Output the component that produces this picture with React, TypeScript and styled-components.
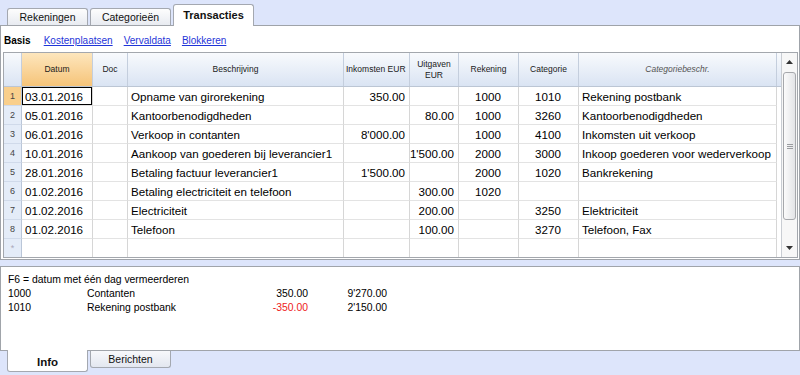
import React from 'react';
import styled, { createGlobalStyle, css } from 'styled-components';

type Align = 'left' | 'right' | 'center';

type Entry = {
  date: string;
  desc: string;
  income: string;
  expense: string;
  account: string;
  category: string;
  catDesc: string;
};

const COLS = '18px 71px 35px 216px 66px 49px 60px 60px 198px';

const rows: Entry[] = [
  { date: '03.01.2016', desc: 'Opname van girorekening', income: '350.00', expense: '', account: '1000', category: '1010', catDesc: 'Rekening postbank' },
  { date: '05.01.2016', desc: 'Kantoorbenodigdheden', income: '', expense: '80.00', account: '1000', category: '3260', catDesc: 'Kantoorbenodigdheden' },
  { date: '06.01.2016', desc: 'Verkoop in contanten', income: "8'000.00", expense: '', account: '1000', category: '4100', catDesc: 'Inkomsten uit verkoop' },
  { date: '10.01.2016', desc: 'Aankoop van goederen bij leverancier1', income: '', expense: "1'500.00", account: '2000', category: '3000', catDesc: 'Inkoop goederen voor wederverkoop' },
  { date: '28.01.2016', desc: 'Betaling factuur leverancier1', income: "1'500.00", expense: '', account: '2000', category: '1020', catDesc: 'Bankrekening' },
  { date: '01.02.2016', desc: 'Betaling electriciteit en telefoon', income: '', expense: '300.00', account: '1020', category: '', catDesc: '' },
  { date: '01.02.2016', desc: 'Electriciteit', income: '', expense: '200.00', account: '', category: '3250', catDesc: 'Elektriciteit' },
  { date: '01.02.2016', desc: 'Telefoon', income: '', expense: '100.00', account: '', category: '3270', catDesc: 'Telefoon, Fax' },
];

const balances = [
  { account: '1000', name: 'Contanten', amount: '350.00', total: "9'270.00", negative: false },
  { account: '1010', name: 'Rekening postbank', amount: '-350.00', total: "2'150.00", negative: true },
];

const App: React.FC = () => {
  return (
    <Page>
      <GlobalStyle />
      <TabStrip>
        <Tab>Rekeningen</Tab>
        <Tab>Categorieën</Tab>
        <Tab $active>Transacties</Tab>
      </TabStrip>

      <Panel>
        <SubBar>
          <SubLabel>Basis</SubLabel>
          <SubLink>Kostenplaatsen</SubLink>
          <SubLink>Vervaldata</SubLink>
          <SubLink>Blokkeren</SubLink>
        </SubBar>

        <GridFrame>
          <GridMain>
            <HeaderRow>
              <HeadCell />
              <HeadCell $highlight>Datum</HeadCell>
              <HeadCell>Doc</HeadCell>
              <HeadCell>Beschrijving</HeadCell>
              <HeadCell $clip>Inkomsten EUR</HeadCell>
              <HeadCell>
                Uitgaven
                <br />
                EUR
              </HeadCell>
              <HeadCell>Rekening</HeadCell>
              <HeadCell>Categorie</HeadCell>
              <HeadCell $italic>Categoriebeschr.</HeadCell>
            </HeaderRow>
            <Body>
              {rows.map((r, i) => (
                <Row key={i}>
                  <RowHead $selected={i === 0}>{i + 1}</RowHead>
                  <Cell $selected={i === 0}>{r.date}</Cell>
                  <Cell />
                  <Cell>{r.desc}</Cell>
                  <Cell $align="right">{r.income}</Cell>
                  <Cell $align="right">{r.expense}</Cell>
                  <Cell $align="center">{r.account}</Cell>
                  <Cell $align="center">{r.category}</Cell>
                  <Cell>{r.catDesc}</Cell>
                </Row>
              ))}
              <Row>
                <RowHead $faint>*</RowHead>
                <Cell />
                <Cell />
                <Cell />
                <Cell />
                <Cell />
                <Cell />
                <Cell />
                <Cell />
              </Row>
            </Body>
          </GridMain>

          <ScrollBar>
            <ScrollArrow>
              <svg width="7" height="4" viewBox="0 0 7 4">
                <path d="M0 4 L3.5 0 L7 4 Z" fill="#333" />
              </svg>
            </ScrollArrow>
            <Track>
              <Thumb>
                <Grip />
              </Thumb>
            </Track>
            <ScrollArrow>
              <svg width="7" height="4" viewBox="0 0 7 4">
                <path d="M0 0 L3.5 4 L7 0 Z" fill="#333" />
              </svg>
            </ScrollArrow>
          </ScrollBar>
        </GridFrame>
      </Panel>

      <InfoPanel>
        <InfoLine>F6 = datum met één dag vermeerderen</InfoLine>
        {balances.map((b) => (
          <BalanceLine key={b.account}>
            <span>{b.account}</span>
            <span>{b.name}</span>
            <Amount $negative={b.negative}>{b.amount}</Amount>
            <Amount>{b.total}</Amount>
          </BalanceLine>
        ))}
      </InfoPanel>

      <BottomTabs>
        <BottomTab $active>Info</BottomTab>
        <BottomTab>Berichten</BottomTab>
      </BottomTabs>
    </Page>
  );
};

export default App;

const GlobalStyle = createGlobalStyle`
  html, body {
    margin: 0;
    padding: 0;
    background: #dde5fb;
    font-family: "Liberation Sans", Arial, sans-serif;
  }
`;

const Page = styled.div`
  width: 800px;
  height: 375px;
  display: flex;
  flex-direction: column;
  overflow: hidden;
  background: #dde5fb;
`;

const TabStrip = styled.div`
  height: 25px;
  display: flex;
  align-items: flex-end;
  gap: 2px;
  padding-left: 7px;
`;

const Tab = styled.div<{ $active?: boolean }>`
  width: 81px;
  box-sizing: border-box;
  height: 17px;
  display: flex;
  align-items: center;
  justify-content: center;
  border: 1px solid #a4a8b0;
  border-bottom: none;
  border-radius: 3px 3px 0 0;
  background: linear-gradient(#fdfdfd, #e8ebf1);
  font-size: 10.5px;
  color: #111;

  ${(p) =>
    p.$active &&
    css`
      position: relative;
      z-index: 1;
      height: 22px;
      margin-bottom: -1px;
      padding-bottom: 2px;
      background: #fff;
      font-weight: bold;
      font-size: 11px;
    `}
`;

const Panel = styled.div`
  height: 235px;
  box-sizing: border-box;
  background: #fff;
  border: 1px solid #9fa3a9;
  display: flex;
  flex-direction: column;
  padding-bottom: 1px;
`;

const SubBar = styled.div`
  height: 26px;
  display: flex;
  align-items: center;
  gap: 11px;
  padding: 2px 0 0 3px;
  box-sizing: border-box;
  font-size: 10px;
`;

const SubLabel = styled.span`
  font-weight: bold;
  color: #000;
  margin-right: 2px;
`;

const SubLink = styled.span`
  color: #1f35d8;
  text-decoration: underline;
`;

const GridFrame = styled.div`
  flex: 1;
  display: flex;
  margin: 0 1px 0 2px;
  border: 1px solid #a3a7ad;
  overflow: hidden;
`;

const GridMain = styled.div`
  flex: 1;
  display: flex;
  flex-direction: column;
  min-width: 0;
`;

const HeaderRow = styled.div`
  height: 34px;
  display: grid;
  grid-template-columns: ${COLS};
  background: linear-gradient(#f8fafd, #dae4f3);
  border-bottom: 1px solid #bcc6d4;
  box-sizing: border-box;
`;

const HeadCell = styled.div<{ $highlight?: boolean; $italic?: boolean; $clip?: boolean }>`
  display: flex;
  align-items: center;
  justify-content: ${(p) => (p.$clip ? 'flex-start' : 'center')};
  text-align: center;
  padding-left: ${(p) => (p.$clip ? '2px' : '0')};
  white-space: nowrap;
  overflow: hidden;
  border-right: 1px solid #c4cedd;
  font-size: 8.5px;
  line-height: 11px;
  color: #1a1a1a;
  ${(p) =>
    p.$highlight &&
    css`
      background: linear-gradient(#fde6bd, #f6c479);
    `}
  ${(p) =>
    p.$italic &&
    css`
      font-style: italic;
      color: #555;
    `}
`;

const Body = styled.div`
  flex: 1;
  overflow: hidden;
`;

const Row = styled.div`
  height: 19px;
  display: grid;
  grid-template-columns: ${COLS};
`;

const RowHead = styled.div<{ $selected?: boolean; $faint?: boolean }>`
  display: flex;
  align-items: center;
  justify-content: center;
  background: ${(p) => (p.$selected ? '#f9cf8c' : '#e4ecf8')};
  border-right: 1px solid #bac6d8;
  border-bottom: 1px solid #d0daea;
  font-size: 9px;
  color: ${(p) => (p.$faint ? '#aab' : '#444')};
`;

const Cell = styled.div<{ $align?: Align; $selected?: boolean }>`
  display: flex;
  align-items: center;
  justify-content: ${(p) =>
    p.$align === 'right' ? 'flex-end' : p.$align === 'center' ? 'center' : 'flex-start'};
  padding: 0 4px 0 3px;
  box-sizing: border-box;
  border-right: 1px solid #d6d6d6;
  border-bottom: 1px solid #e3e3e3;
  font-size: 11.6px;
  color: #000;
  white-space: nowrap;
  overflow: hidden;
  ${(p) =>
    p.$selected &&
    css`
      box-shadow: inset 0 0 0 1px #000;
    `}
`;

const ScrollBar = styled.div`
  width: 16px;
  display: flex;
  flex-direction: column;
  border-left: 1px solid #c9cdd3;
  background: #f7f7f7;
  box-sizing: border-box;
`;

const ScrollArrow = styled.div`
  height: 18px;
  display: flex;
  align-items: center;
  justify-content: center;
  flex-shrink: 0;
`;

const Track = styled.div`
  flex: 1;
  padding: 1px 1px 0 1px;
`;

const Thumb = styled.div`
  height: 148px;
  box-sizing: border-box;
  border: 1px solid #a6a8ac;
  border-radius: 3px;
  background: linear-gradient(to right, #fbfbfb, #e3e4e7);
  display: flex;
  align-items: center;
  justify-content: center;
`;

const Grip = styled.div`
  width: 6px;
  height: 5px;
  background: repeating-linear-gradient(#9a9ca0 0 1px, transparent 1px 2px);
`;

const InfoPanel = styled.div`
  margin-top: 6px;
  height: 85px;
  box-sizing: border-box;
  background: #fff;
  border: 1px solid #a0a4aa;
  padding: 6px 7px;
  font-size: 10.4px;
  line-height: 14px;
  color: #000;
`;

const InfoLine = styled.div``;

const BalanceLine = styled.div`
  display: grid;
  grid-template-columns: 79px 141px 80px 79px;
`;

const Amount = styled.span<{ $negative?: boolean }>`
  text-align: right;
  color: ${(p) => (p.$negative ? '#ee1c1c' : '#000')};
`;

const BottomTabs = styled.div`
  display: flex;
  align-items: flex-start;
  gap: 2px;
  padding-left: 7px;
  margin-top: -1px;
`;

const BottomTab = styled.div<{ $active?: boolean }>`
  width: 81px;
  height: 17px;
  box-sizing: border-box;
  display: flex;
  align-items: center;
  justify-content: center;
  border: 1px solid #a4a8b0;
  border-top: none;
  border-radius: 0 0 3px 3px;
  background: linear-gradient(#f7f8fb, #e3e7f0);
  font-size: 10.5px;
  color: #111;
  margin-top: 1px;

  ${(p) =>
    p.$active &&
    css`
      height: 22px;
      margin-top: 0;
      padding-top: 2px;
      background: #fff;
      font-weight: bold;
      font-size: 11.5px;
      position: relative;
      z-index: 1;
    `}
`;
